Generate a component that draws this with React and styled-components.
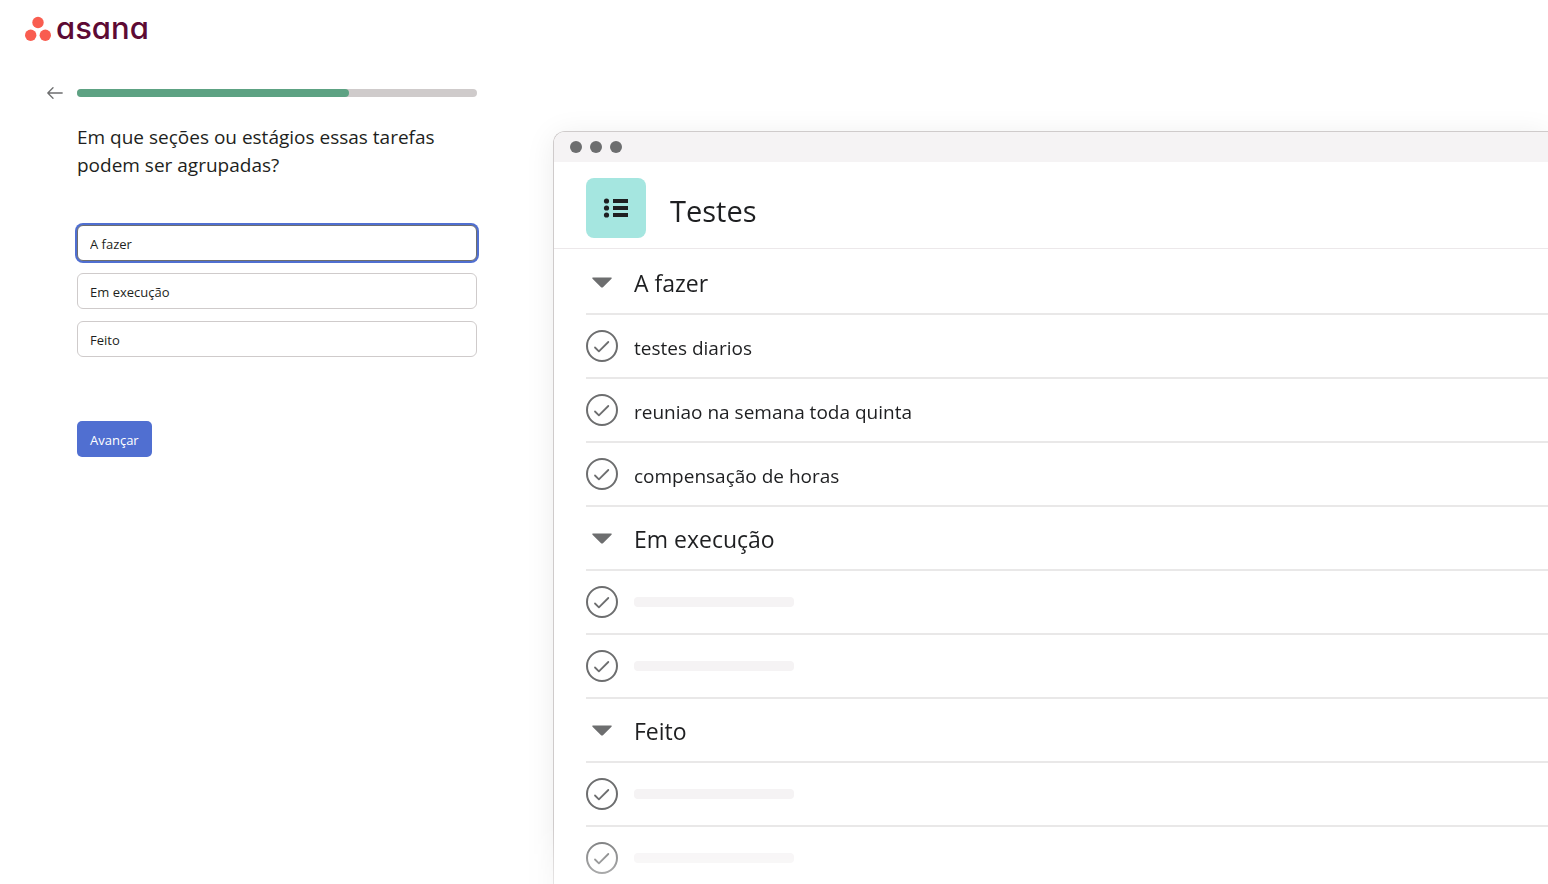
import React, { useState } from "react";
import styled, { createGlobalStyle, css } from "styled-components";

const colors = {
  text: "#1e1f21",
  icon: "#6d6e6f",
  rule: "#e9e8e8",
  border: "#cfcbcb",
  green: "#5da283",
  blue: "#506fd1",
};

const GlobalStyle = createGlobalStyle`
  *, *::before, *::after { box-sizing: border-box; }
  body {
    margin: 0;
    background: #fff;
    color: ${colors.text};
    font-family: "Segoe UI", "Open Sans", "Noto Sans", sans-serif;
  }
  h1, h2, h3, ul { margin: 0; padding: 0; font-weight: 400; }
  ul { list-style: none; }
`;

const Page = styled.div`
  display: flex;
  height: 100vh;
  overflow: hidden;
`;

const Sidebar = styled.div`
  flex: none;
  width: 512px;
  display: flex;
  flex-direction: column;
`;

const Logo = styled.a`
  display: flex;
  align-items: center;
  gap: 4px;
  height: 56px;
  padding: 0 24px;
  color: #5d0a34;
  text-decoration: none;
`;

const Wordmark = styled.span`
  font-family: Inter, sans-serif;
  font-size: 31px;
  font-weight: 500;
  line-height: 48px;
  font-feature-settings: "cv11";
`;

const ProgressRow = styled.div`
  display: flex;
  align-items: center;
  gap: 14px;
  padding: 28px 35px 0 47px;
`;

const BackButton = styled.button`
  display: flex;
  width: 16px;
  height: 18px;
  padding: 0;
  border: 0;
  background: none;
  color: ${colors.icon};
  align-items: center;
  cursor: pointer;
`;

const Track = styled.div`
  flex: 1;
  height: 8px;
  border-radius: 4px;
  background: ${colors.border};
`;

const Fill = styled.div`
  width: 68%;
  height: 100%;
  border-radius: 4px;
  background: ${colors.green};
`;

const Form = styled.form`
  display: flex;
  flex-direction: column;
  padding: 21px 35px 0 77px;
`;

const Question = styled.h1`
  font-size: 19px;
  line-height: 28px;
`;

const Fields = styled.div`
  display: flex;
  flex-direction: column;
  gap: 12px;
  margin: 46px 0 64px;
`;

const controlText = css`
  font-family: inherit;
  font-size: 13px;
  line-height: 20px;
`;

const TextField = styled.input`
  ${controlText}
  width: 100%;
  height: 36px;
  padding: 2px 12px 0;
  border: 1px solid ${(p) => (p.$active ? colors.icon : colors.border)};
  border-radius: 6px;
  outline: none;
  color: ${colors.text};
  background: #fff;
  box-shadow: ${(p) => (p.$active ? `0 0 0 2px ${colors.blue}` : "none")};
`;

const SubmitButton = styled.button`
  ${controlText}
  align-self: flex-start;
  height: 36px;
  padding: 2px 13px 0;
  border: 0;
  border-radius: 5px;
  color: #fff;
  background: ${colors.blue};
  cursor: pointer;
`;

const Stage = styled.main`
  flex: 1;
  min-width: 0;
  overflow: hidden;
  padding: 131px 0 0 41px;
  mask-image: linear-gradient(to bottom, #000 calc(100% - 60px), rgba(0, 0, 0, 0.5));
`;

const Window = styled.section`
  border: solid ${colors.border};
  border-width: 1px 0 0 1px;
  border-radius: 12px 0 0 0;
  background: #fff;
  box-shadow: 0 4px 30px rgba(0, 0, 0, 0.08);
`;

const TitleBar = styled.div`
  display: flex;
  align-items: center;
  gap: 8px;
  height: 30px;
  padding-left: 16px;
  border-radius: 11px 0 0 0;
  background: #f5f3f4;
`;

const Dot = styled.span`
  width: 12px;
  height: 12px;
  border-radius: 50%;
  background: ${colors.icon};
`;

const ProjectHeader = styled.header`
  display: flex;
  align-items: center;
  gap: 24px;
  height: 87px;
  padding: 6px 32px 0;
  border-bottom: 1px solid #ece8ea;
`;

const ProjectIcon = styled.div`
  display: grid;
  place-items: center;
  width: 60px;
  height: 60px;
  border-radius: 8px;
  background: #a5e6e0;
`;

const ProjectName = styled.h2`
  padding-top: 6px;
  font-size: 29px;
  line-height: 40px;
`;

const Board = styled.div`
  padding: 2px 0 0 32px;
`;

const Row = styled.div`
  display: flex;
  align-items: center;
  gap: 16px;
  height: 64px;
  border-bottom: 2px solid ${colors.rule};
`;

const SectionTitle = styled.h3`
  padding-top: 2px;
  font-size: 23px;
  line-height: 32px;
`;

const TaskName = styled.span`
  padding-top: 4px;
  font-size: 19px;
  line-height: 28px;
`;

const Placeholder = styled.span`
  width: 160px;
  height: 10px;
  border-radius: 4px;
  background: #f5f3f4;
`;

const LogoMark = () => (
  <svg width="28" height="28" viewBox="0 0 28 28" fill="#f95d50" aria-hidden="true">
    <circle cx="14" cy="8.5" r="5.7" />
    <circle cx="6.7" cy="21.2" r="5.7" />
    <circle cx="21.3" cy="21.2" r="5.7" />
  </svg>
);

const ArrowLeft = () => (
  <svg width="16" height="12" viewBox="0 0 16 12" fill="none" stroke="currentColor" strokeWidth="1.3" strokeLinecap="round" strokeLinejoin="round" aria-hidden="true">
    <path d="M15.2 6H.8M6 .8.8 6 6 11.2" />
  </svg>
);

const ListIcon = () => (
  <svg width="26" height="20" viewBox="0 0 26 20" fill={colors.text} aria-hidden="true">
    <circle cx="3.5" cy="3" r="2.6" />
    <circle cx="3.5" cy="10" r="2.6" />
    <circle cx="3.5" cy="17" r="2.6" />
    <path d="M10 1h15v4H10zM10 8h15v4H10zM10 15h15v4H10z" />
  </svg>
);

const Caret = () => (
  <svg width="32" height="32" viewBox="0 0 32 32" fill={colors.icon} aria-hidden="true">
    <path d="M7 11.500h18c.7 0 1 .7.500 1.200l-8.300 8.300c-.7.700-1.700.7-2.400 0l-8.300-8.300C6 12.200 6.300 11.500 7 11.500z" />
  </svg>
);

const CheckCircle = () => (
  <svg width="32" height="32" viewBox="0 0 32 32" fill="none" stroke={colors.icon} aria-hidden="true">
    <circle cx="16" cy="16" r="15" strokeWidth="2" />
    <path d="M9 17.500 12.900 21.300 22.300 12" strokeWidth="1.800" strokeLinecap="round" strokeLinejoin="round" />
  </svg>
);

const tasks = [
  ["testes diarios", "reuniao na semana toda quinta", "compensação de horas"],
  ["", ""],
  ["", "", ""],
];

export default function App() {
  const [sections, setSections] = useState(["A fazer", "Em execução", "Feito"]);
  const [active, setActive] = useState(0);

  const rename = (index, value) =>
    setSections(sections.map((name, i) => (i === index ? value : name)));

  return (
    <>
      <GlobalStyle />
      <Page>
        <Sidebar>
          <Logo href="#">
            <LogoMark />
            <Wordmark>asana</Wordmark>
          </Logo>
          <ProgressRow>
            <BackButton type="button" aria-label="Voltar">
              <ArrowLeft />
            </BackButton>
            <Track>
              <Fill />
            </Track>
          </ProgressRow>
          <Form onSubmit={(e) => e.preventDefault()}>
            <Question>Em que seções ou estágios essas tarefas podem ser agrupadas?</Question>
            <Fields>
              {sections.map((name, i) => (
                <TextField
                  key={i}
                  type="text"
                  aria-label={`Seção ${i + 1}`}
                  value={name}
                  $active={i === active}
                  onFocus={() => setActive(i)}
                  onChange={(e) => rename(i, e.target.value)}
                />
              ))}
            </Fields>
            <SubmitButton type="submit">Avançar</SubmitButton>
          </Form>
        </Sidebar>
        <Stage>
          <Window>
            <TitleBar>
              <Dot />
              <Dot />
              <Dot />
            </TitleBar>
            <ProjectHeader>
              <ProjectIcon>
                <ListIcon />
              </ProjectIcon>
              <ProjectName>Testes</ProjectName>
            </ProjectHeader>
            <Board>
              {sections.map((name, i) => (
                <section key={i}>
                  <Row>
                    <Caret />
                    <SectionTitle>{name}</SectionTitle>
                  </Row>
                  <ul>
                    {tasks[i].map((task, j) => (
                      <Row as="li" key={j}>
                        <CheckCircle />
                        {task ? <TaskName>{task}</TaskName> : <Placeholder />}
                      </Row>
                    ))}
                  </ul>
                </section>
              ))}
            </Board>
          </Window>
        </Stage>
      </Page>
    </>
  );
}
